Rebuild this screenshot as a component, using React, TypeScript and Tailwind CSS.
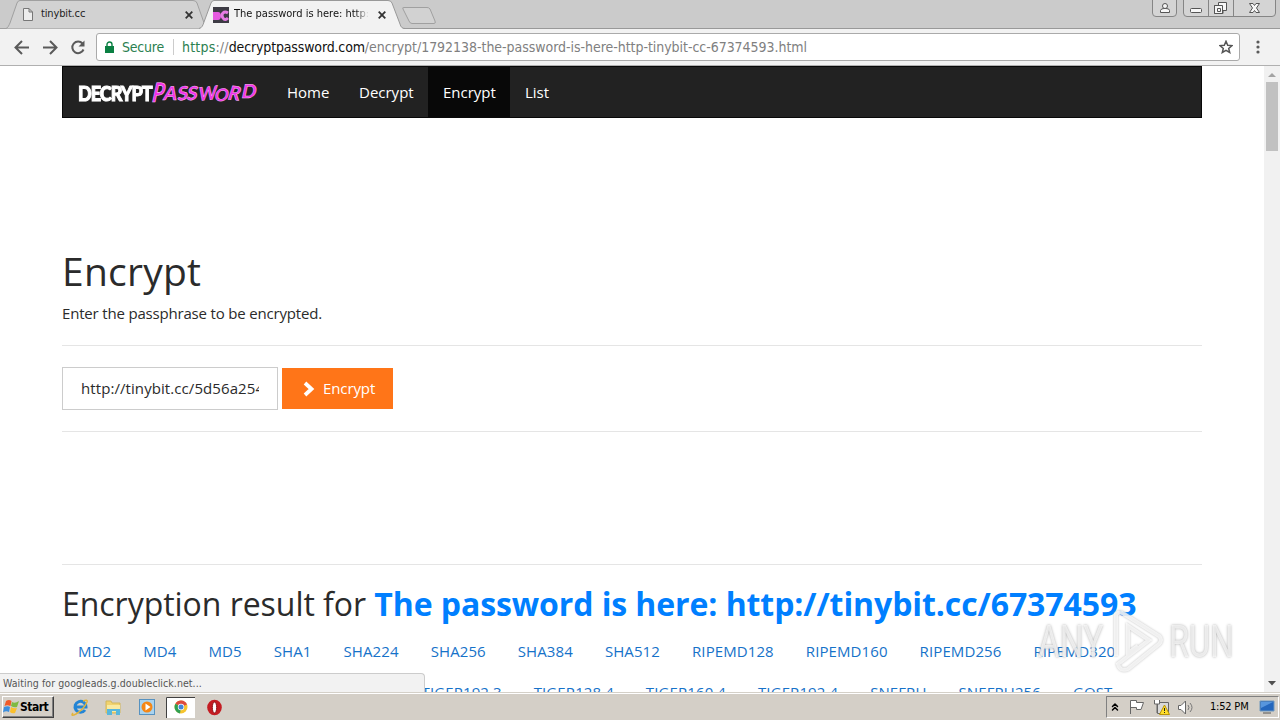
import { ChevronsUp } from 'lucide-react'

const hashes = ['MD2', 'MD4', 'MD5', 'SHA1', 'SHA224', 'SHA256', 'SHA384', 'SHA512', 'RIPEMD128', 'RIPEMD160', 'RIPEMD256', 'RIPEMD320']
const moreHashes = ['WHIRLPOOL', 'TIGER128,3', 'TIGER160,3', 'TIGER192,3', 'TIGER128,4', 'TIGER160,4', 'TIGER192,4', 'SNEFRU', 'SNEFRU256', 'GOST']

function CloseIcon() {
  return (
    <svg width="8" height="8" viewBox="0 0 8 8" className="shrink-0">
      <path d="M.7.7l6.6 6.6M7.3.7L.7 7.3" stroke="#333" strokeWidth="1.8" />
    </svg>
  )
}

function TabStrip() {
  return (
    <div className="relative flex h-[29px] border-b border-[#999] bg-[#cbcbcb]">
      {/* slanted tab outlines */}
      <svg width="450" height="29" className="absolute left-0 top-0 z-10">
        <path d="M0 28.5H6C8 28 9 25 10 23L17 3Q18 .5 20 .5H193Q196 .5 197 3L206 28.5" fill="#d2d2d2" stroke="#a0a0a0" />
        <path d="M199 29C202 28 203 25 204 22L211 3Q212 .5 214 .5H388Q391 .5 392 3L400 24Q401 28 404 29Z" fill="#f2f2f2" />
        <path d="M199 28.5C202 28 203 25 204 22L211 3Q212 .5 214 .5H388Q391 .5 392 3L400 24Q401 28.5 405 28.5H450" fill="none" stroke="#999" />
        <path d="M404 7.5H427Q429 7.5 430 9L435 21Q436 23.500 434 23.500H412Q410 23.500 409 21L403 9Q402 7.500 404 7.500Z" fill="#d2d2d2" stroke="#a0a0a0" />
      </svg>
      <div className="relative z-20 flex h-full w-[193px] items-center pl-[23px]">
        <svg width="10" height="13" viewBox="0 0 10 13" className="mt-px">
          <path d="M.5.5H6L9.500 4V12.500H.5ZM6 .5V4H9.500" fill="#ededed" stroke="#777" />
        </svg>
        <span className="ml-[8px] mt-px flex-1 text-[11px] tracking-[-0.15px] text-[#222]">tinybit.cc</span>
        <div className="mt-px"><CloseIcon /></div>
      </div>
      <div className="relative z-20 flex h-full w-[195px] items-center pl-[20px]">
        <svg width="16" height="16" viewBox="0 0 16 16" className="mt-px shrink-0">
          <path d="M0 0H16V16H0Z" fill="#3d3b44" />
          <path d="M0 5H5C7 5 8 7 8 9S7 13 5 13H0Z" fill="#e65ae0" />
          <path d="M15 6Q12 4 10 6T10 11T15 11" stroke="#e77de5" strokeWidth="3" fill="none" />
        </svg>
        <span className="ml-[5px] mt-px w-[135px] overflow-hidden whitespace-nowrap bg-gradient-to-r from-[#111] from-90% to-transparent bg-clip-text text-[11px] text-transparent">The password is here: http://</span>
        <div className="ml-[9px] mt-px"><CloseIcon /></div>
      </div>
      <div className="flex-1" />
      {/* window buttons */}
      <svg width="130" height="18" viewBox="0 0 130 18" className="shrink-0">
        <path d="M2.500 0V13Q2.500 16.500 6 16.500H23Q26.500 16.500 26.500 13V0M33.500 0V13Q33.500 16.500 37 16.500H122Q125.500 16.500 125.500 13V0M58.500 0V16.500M83.500 0V16.500" fill="#d4d4d4" stroke="#858585" />
        <g fill="#f7f7f7" stroke="#555">
          <path d="M10.500 12.500V10.500Q11 8.500 14 8.500H16Q19.500 8.500 19.500 10.500V12.500Z" />
          <circle cx="15" cy="6" r="2.500" />
          <rect x="40.500" y="8.500" width="11" height="4" rx="1" />
          <path d="M68.500 2.500H76.500V10.500H73V13.500H64.500V5.500H68.500Z" />
          <path d="M64.500 5.500H72.500V13.500H64.500Z" />
          <path d="M67.500 8.500H70.500V11.500H67.500Z" />
          <path d="M99.500 3.500H103L104.500 5.500L106 3.500H109.500L106.500 8L109.500 12.500H106L104.500 10.500L103 12.500H99.500L102.500 8Z" />
        </g>
      </svg>
    </div>
  )
}

function Toolbar() {
  return (
    <div className="flex h-[37px] items-center border-b border-[#b0b0b0] bg-[#f2f2f2]">
      <svg width="96" height="37" className="shrink-0" fill="none" stroke="#5a5a5a" strokeWidth="2">
        <path d="M29 18.500H16M22 12L15.500 18.500L22 25M43 18.500H56M50 12L56.500 18.500L50 25" />
        <path d="M82.500 14.500A5.800 5.800 0 1 0 83.500 20.500" />
        <path d="M84.500 11.500V17.500H78.500Z" fill="#5a5a5a" stroke="none" />
      </svg>
      <div className="flex h-[28px] w-[1144px] items-center rounded-[3px] border border-[#aaa] bg-white text-[14px]">
        <svg width="9" height="12" viewBox="0 0 9 12" className="ml-[8px]">
          <path d="M0 5H9V12H0Z" fill="#0b8043" />
          <path d="M2 5V3.500a2.500 2.500 0 0 1 5 0V5" fill="none" stroke="#0b8043" strokeWidth="1.400" />
        </svg>
        <span className="ml-[8px] w-[43px] whitespace-nowrap tracking-[-0.2px] text-[#2b8050]">Secure</span>
        <div className="ml-[8px] h-[16px] w-px bg-[#ccc]" />
        <div className="ml-[8px] flex-1 whitespace-nowrap text-[#808080]">
          <span className="tracking-[0.2px]"><span className="text-[#2b8050]">https</span>://</span>
          <span className="tracking-[-0.15px] text-[#111]">decryptpassword.com</span>
          <span className="tracking-[-0.04px]">/encrypt/1792138-the-password-is-here-http-tinybit-cc-67374593.html</span>
        </div>
        <svg width="14" height="14" viewBox="0 0 14 14" className="mr-[6px]">
          <path d="M7 1.300L8.700 5.200L13 5.600L9.700 8.400L10.700 12.500L7 10.300L3.300 12.500L4.300 8.400L1 5.600L5.300 5.200Z" fill="none" stroke="#555" strokeWidth="1.500" />
        </svg>
      </div>
      <svg width="4" height="14" viewBox="0 0 4 14" className="ml-[16px]" fill="#5a5a5a">
        <circle cx="2" cy="2" r="1.600" /><circle cx="2" cy="7" r="1.600" /><circle cx="2" cy="12" r="1.600" />
      </svg>
    </div>
  )
}

function Logo() {
  return (
    <div className="flex w-[209px] items-center pl-[15px] font-['Lato',sans-serif] leading-[28px]">
      <div className="w-[75px] shrink-0 pt-[4px]">
        <span className="inline-block origin-left scale-x-[0.86] whitespace-nowrap text-[21px] font-black tracking-[-1.2px] [-webkit-text-stroke:1px_#fff]">DECRYPT</span>
      </div>
      <div className="-skew-x-12 whitespace-nowrap pt-[2px] text-[19px] font-bold tracking-[-0.2px] text-[#f32fe9] [-webkit-text-stroke:0.5px_#f9bdf6]">
        <span className="inline-block -translate-y-px scale-y-[1.4]">P</span>
        <span className="inline-block">A</span>
        <span className="inline-block -rotate-6">S</span>
        <span className="inline-block">S</span>
        <span className="inline-block -rotate-6 scale-x-90">W</span>
        <span className="-ml-[3px] inline-block translate-y-[2px] scale-90">O</span>
        <span className="-ml-[1px] inline-block rotate-6">R</span>
        <span className="ml-px inline-block -translate-y-[2px]">D</span>
      </div>
    </div>
  )
}

function NavBar() {
  return (
    <nav className="flex h-[52px] border border-[#080808] bg-[#222] text-[15px] leading-[50px] text-white">
      <Logo />
      <a className="w-[72px] pl-[15px]">Home</a>
      <a className="w-[84px] pl-[15px]">Decrypt</a>
      <a className="w-[82px] bg-[#080808] pl-[15px]">Encrypt</a>
      <a className="pl-[15px]">List</a>
    </nav>
  )
}

function HashRow({ items }: { items: string[] }) {
  return (
    <div className="flex h-[41px] gap-[2px] whitespace-nowrap pl-px tracking-[0.1px]">
      {items.map((name) => (
        <a key={name} className="px-[15px] leading-[41px] text-[#1672c9]">{name}</a>
      ))}
    </div>
  )
}

function Watermark() {
  return (
    <div className="absolute left-[1038px] top-[544px] flex h-[64px] w-[196px] items-center font-['Roboto'] text-[44px] text-white/70 [text-shadow:0_0_3px_#aaa]">
      <span className="w-[66px] origin-left scale-x-[0.76] whitespace-nowrap">ANY</span>
      <svg width="65" height="64" viewBox="0 0 65 64" fill="none" className="shrink-0 drop-shadow-[0_0_1px_#aaa]">
        <path d="M12 46V4Q16 1 20 4L55 26Q59 30 55 34L24 59Q16 62 14 54L45 30L24 16V43L34 36" stroke="#fff" strokeOpacity=".75" strokeWidth="4" />
      </svg>
      <span className="origin-left scale-x-[0.74] whitespace-nowrap">RUN</span>
    </div>
  )
}

function Page() {
  return (
    <div className="relative flex h-[626px] overflow-hidden bg-white font-['Open_Sans',sans-serif] text-[15px] text-[#2b2b2b]">
      <main className="ml-[62px] w-[1140px] shrink-0">
        <NavBar />
        <h1 className="mt-[131px] h-[44px] text-[39px] leading-[44px] tracking-[0.25px]">Encrypt</h1>
        <p className="mt-[10px] h-[21px] leading-[21px] tracking-[-0.18px]">Enter the passphrase to be encrypted.</p>
        <hr className="mt-[21px] border-[#e5e5e5]" />
        <div className="mt-[21px] flex h-[43px] gap-[4px]">
          <div className="w-[216px] border border-[#ccc] px-[18px] leading-[41px]">
            <div className="overflow-hidden whitespace-nowrap tracking-[0.08px]">http://tinybit.cc/5d56a254</div>
          </div>
          <button className="mt-px flex h-[41px] w-[111px] items-center bg-[#ff7518] pl-[20px] text-white">
            <svg width="13" height="16" viewBox="0 0 13 16"><path d="M3 2L9.500 8L3 14" fill="none" stroke="#fff" strokeWidth="3.800" /></svg>
            <span className="ml-[8px] tracking-[-0.1px]">Encrypt</span>
          </button>
        </div>
        <hr className="mt-[21px] border-[#e5e5e5]" />
        <hr className="mt-[132px] border-[#e5e5e5]" />
        <h2 className="mt-[21px] h-[36px] whitespace-nowrap text-[32px] leading-[36px] tracking-[-0.04px]">Encryption result for <b className="tracking-[-0.09px] text-[#007fff]">The password is here: http://tinybit.cc/67374593</b></h2>
        <div className="mt-[9px]">
          <HashRow items={hashes} />
          <HashRow items={moreHashes} />
        </div>
      </main>
      <div className="ml-auto flex w-[16px] flex-col items-center bg-[#f1f1f1]">
        <svg width="16" height="16"><path d="M4 11L8 7L12 11Z" fill="#a3a3a3" /></svg>
        <div className="h-[69px] w-[12px] bg-[#c1c1c1]" />
        <svg width="16" height="16" className="mt-auto"><path d="M4 5H12L8 9.500Z" fill="#505050" /></svg>
      </div>
      <Watermark />
      <div className="absolute bottom-0 left-0 h-[19px] w-[425px] rounded-tr-[4px] border-r border-t border-[#ccc] bg-[#f2f2f2] pl-[3px] font-['DejaVu_Sans_Condensed','DejaVu_Sans',sans-serif] text-[10.5px] leading-[18px] tracking-[0.07px] text-[#555]">Waiting for googleads.g.doubleclick.net...</div>
    </div>
  )
}

function Taskbar() {
  return (
    <div className="flex h-[28px] items-center border-t border-[#d4d0c8] bg-[#d4cfc7] text-[11px] text-black shadow-[inset_0_1px_0_#fff]">
      <div className="ml-[2px] mt-px flex h-[22px] w-[52px] items-center border border-b-[#404040] border-l-white border-r-[#404040] border-t-white shadow-[inset_-1px_-1px_0_#808080]">
        <svg width="16" height="16" viewBox="0 0 16 16" className="shrink-0">
          <path d="M3 2Q6 0 8.500 2L7.500 7Q4 5.500 1.500 7Z" fill="#f05a28" />
          <path d="M9 3Q12 5 16 2L14 8Q11 9 8 7Z" fill="#7fba42" />
          <path d="M1 8Q5 6.500 7 8L6 13Q3 11.500 0 13.500Z" fill="#3b8ede" />
          <path d="M8 8Q11 10 14 9L12 14Q9 15 7 13Z" fill="#fbc02d" />
        </svg>
        <b className="ml-px text-[12px] tracking-[-0.5px]">Start</b>
      </div>
      <svg width="190" height="26" viewBox="54 694 190 26" className="shrink-0">
        {/* internet explorer */}
        <path d="M85 710A5.500 5.500 0 1 1 86 707H76" fill="none" stroke="#2385d5" strokeWidth="3" />
        <path d="M73 713Q70 717 76 714Q84 709 87 702Q88 699 83 701" fill="none" stroke="#e3b43a" strokeWidth="1.500" />
        {/* explorer folder */}
        <path d="M106 701H111L112 703H120V713H106Z" fill="#f1d36f" stroke="#d2b75c" />
        <path d="M107 705H120V712H107Z" fill="#f9eaa1" />
        <path d="M107 715V709H120V715H116V711H112V715Z" fill="#58b7dc" />
        {/* media player */}
        <rect x="139.500" y="699.500" width="15" height="15" fill="#a9d3ef" stroke="#5792c0" />
        <circle cx="147" cy="707" r="5.500" fill="#f58716" />
        <path d="M145.500 703.500L150.500 707L145.500 710.500Z" fill="#fff" />
        {/* chrome */}
        <path d="M166 697H195V718H166Z" fill="#fff" />
        <path d="M166.500 718V697.500H195" fill="none" stroke="#404040" />
        <circle cx="181" cy="707" r="6.500" fill="#f6c42e" />
        <path d="M181 707L175.400 703.700A6.500 6.500 0 0 1 187 704.500Z" fill="#dd4b3e" />
        <path d="M181 707L175.400 703.700A6.500 6.500 0 0 0 180 713.400Z" fill="#30a052" />
        <circle cx="181" cy="707" r="3.200" fill="#fff" />
        <circle cx="181" cy="707" r="2.500" fill="#4285d8" />
        {/* opera */}
        <ellipse cx="214.500" cy="707.500" rx="7.300" ry="7.800" fill="#c41c22" />
        <ellipse cx="214.500" cy="707.500" rx="2.200" ry="5.500" fill="#fff" stroke="#8b1015" />
      </svg>
      <div className="ml-auto mr-px mt-px flex h-[22px] w-[173px] items-center border border-b-white border-l-[#808080] border-r-white border-t-[#808080]">
        <ChevronsUp className="ml-[2px] h-[12px] w-[12px]" strokeWidth={3} />
        <svg width="74" height="20" viewBox="1121 697 74 20" className="shrink-0">
          <path d="M1130.500 714V700.500H1136.500V702.500H1143.500L1141 709.500H1136.500V707.500H1131" fill="#fff" stroke="#666" />
          <path d="M1157.500 702.500H1168.500V713.500H1157.500Z" fill="#d9d9d9" stroke="#666" />
          <path d="M1154.500 700V704H1159.500V700M1157 704V713" fill="#fff" stroke="#666" />
          <path d="M1164.500 705L1169.500 714.500H1159.500Z" fill="#ffdf2c" stroke="#b99407" />
          <path d="M1164.500 708V711M1164.500 712V713" stroke="#222" />
          <path d="M1178.500 705.500H1181L1185.500 701V714L1181 709.500H1178.500Z" fill="#fff" stroke="#666" />
          <path d="M1188 705Q1190 707.500 1188 710M1190 703Q1194 707.500 1190 712" fill="none" stroke="#777" />
        </svg>
        <span className="ml-[15px] w-[40px] whitespace-nowrap tracking-[-0.2px]">1:52 PM</span>
        <svg width="16" height="14" viewBox="0 0 16 14" className="ml-[9px] shrink-0">
          <path d="M1 1H15V11H1Z" fill="#2467bd" stroke="#7199bd" />
          <path d="M2 2H14L2 8Z" fill="#5796dd" />
          <path d="M4 13H12" stroke="#555" />
        </svg>
      </div>
    </div>
  )
}

export default function App() {
  return (
    <div className="h-[720px] w-[1280px] overflow-hidden bg-white font-['DejaVu_Sans_Condensed','DejaVu_Sans',sans-serif]">
      <TabStrip />
      <Toolbar />
      <Page />
      <Taskbar />
    </div>
  )
}
